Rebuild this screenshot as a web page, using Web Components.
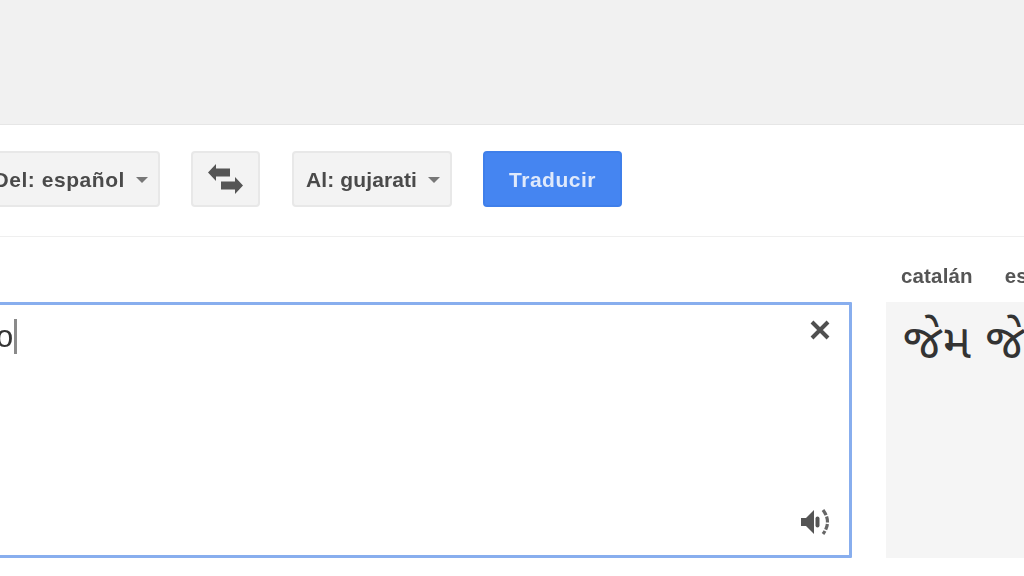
<!DOCTYPE html>
<html lang="es"><head><meta charset="utf-8"><title>Traductor</title>
<style>
html,body{margin:0;padding:0;width:1024px;height:576px;overflow:hidden;background:#fff;font-family:"Liberation Sans",Arial,sans-serif}
</style></head><body>
<translate-app>
  <tool-bar slot="toolbar">
    <g-btn align="end" style="letter-spacing:.55px">Del: español<g-caret></g-caret></g-btn>
    <g-btn variant="icon" label="Intercambiar idiomas"><swap-icon></swap-icon></g-btn>
    <g-btn align="end">Al: gujarati<g-caret></g-caret></g-btn>
    <g-btn variant="primary">Traducir</g-btn>
  </tool-bar>
  <source-box slot="source">o</source-box>
  <result-pane slot="result"></result-pane>
</translate-app>
<script>
function def(name,html,init){
  customElements.define(name,class extends HTMLElement{
    constructor(){super();this.attachShadow({mode:'open'}).innerHTML=html;}
    connectedCallback(){if(init)init(this);}
  });
}
def('translate-app',`<style>
:host{display:grid;grid-template-rows:125px 112px 1fr;width:1024px;height:576px;overflow:hidden}
.band{background:#f1f1f1;border-bottom:1px solid #e6e6e6}
.tools{border-bottom:1px solid #efefef;display:flex;align-items:flex-start;min-width:0;background:#fff}
.main{display:grid;grid-template-columns:852px 172px;min-height:0}
</style>
<div class="band"></div>
<div class="tools"><slot name="toolbar"></slot></div>
<div class="main"><slot name="source"></slot><slot name="result"></slot></div>`);
def('tool-bar',`<style>
:host{display:flex;gap:31px;margin:26px 0 0 -40px}
::slotted(g-btn:nth-child(1)){width:200px}
::slotted(g-btn:nth-child(2)){width:69px}
::slotted(g-btn:nth-child(3)){width:160px;margin-left:1px}
::slotted(g-btn:nth-child(4)){width:139px}
</style><slot></slot>`);
def('g-btn',`<style>
:host{display:flex;align-items:center;justify-content:center;box-sizing:border-box;height:56px;border:2px solid #e8e8e8;border-radius:4px;background:#f3f3f3;color:#4a4a4a;font:bold 21px/1 "Liberation Sans",Arial,sans-serif;letter-spacing:.1px;white-space:nowrap}
:host([align=end]){justify-content:flex-end;padding-right:10px}
:host([variant=primary]){background:#4585f1;border-color:#3f7fea;color:#dfe9fb;letter-spacing:.5px}
span{filter:blur(.6px);display:flex;align-items:center}
</style><span><slot></slot></span>`,el=>{const l=el.getAttribute('label');if(l)el.setAttribute('aria-label',l);});
def('g-caret',`<style>
:host{display:inline-block;width:0;height:0;margin-left:11px;margin-top:2px;border-left:6px solid transparent;border-right:6px solid transparent;border-top:6px solid #777}
</style>`);
def('swap-icon',`<style>:host{display:block;width:36px;height:31px;margin-top:1px}svg{display:block}</style>
<svg width="36" height="31" viewBox="0 0 36 31"><path fill="#555" d="M0 8.500 8 0v4.500h14V12.500H8V17zM35 21.500 27 30v-4.500H13V17.500H27V13z"/></svg>`);
def('source-box',`<style>
:host{display:block;box-sizing:border-box;margin-top:65px;margin-left:-20px;height:256px;border:3px solid #88aeee;border-radius:1px;background:#fff;position:relative;width:872px;font:31px/1 "Liberation Sans",Arial,sans-serif;color:#333}
.txt{display:flex;align-items:center;height:36px;margin:13px 0 0 13px;filter:blur(.6px)}
.cursor{width:3px;height:35px;background:#8a8a8a;margin-left:1px}
.x{position:absolute;top:14px;right:18px;width:22px;height:22px;display:block;filter:blur(.5px)}
.spk{position:absolute;right:17px;bottom:18px;width:32px;height:30px;display:block;filter:blur(.5px)}
</style>
<div class="txt"><slot></slot><span class="cursor"></span></div>
<svg class="x" viewBox="0 0 22 22" aria-label="Borrar"><path d="M3 3 19 19M19 3 3 19" stroke="#505050" stroke-width="4" fill="none"/></svg>
<svg class="spk" viewBox="0 0 32 30" aria-label="Escuchar"><path fill="#555" d="M1 11h5l8-8v24l-8-8H1z"/><rect x="15.500" y="9.500" width="4" height="11" rx="2" fill="#555"/><path d="M23 3q9 12 0 24" stroke="#666" stroke-width="3.200" stroke-dasharray="6 1.500" fill="none"/></svg>`);
def('result-pane',`<style>
:host{display:flex;flex-direction:column;margin-left:34px;min-width:0;overflow:hidden}
.tabs{display:flex;gap:32px;height:65px;padding:29px 0 0 15px;box-sizing:border-box;font:bold 20.500px/20px "Liberation Sans",Arial,sans-serif;letter-spacing:.15px;color:#555;white-space:nowrap}
.tabs span{filter:blur(.5px)}
.out{background:#f5f5f5;height:256px;padding:15px 0 0 17px;box-sizing:border-box;font:48px/60px "Noto Sans Gujarati","Lohit Gujarati","Noto Sans","DejaVu Sans",sans-serif;word-spacing:2px;color:#333;white-space:nowrap;overflow:hidden}
</style>
<div class="tabs"><span>catalán</span><span>español</span></div>
<div class="out" lang="gu">જેમ જેમ</div>`);
</script>
</body></html>
